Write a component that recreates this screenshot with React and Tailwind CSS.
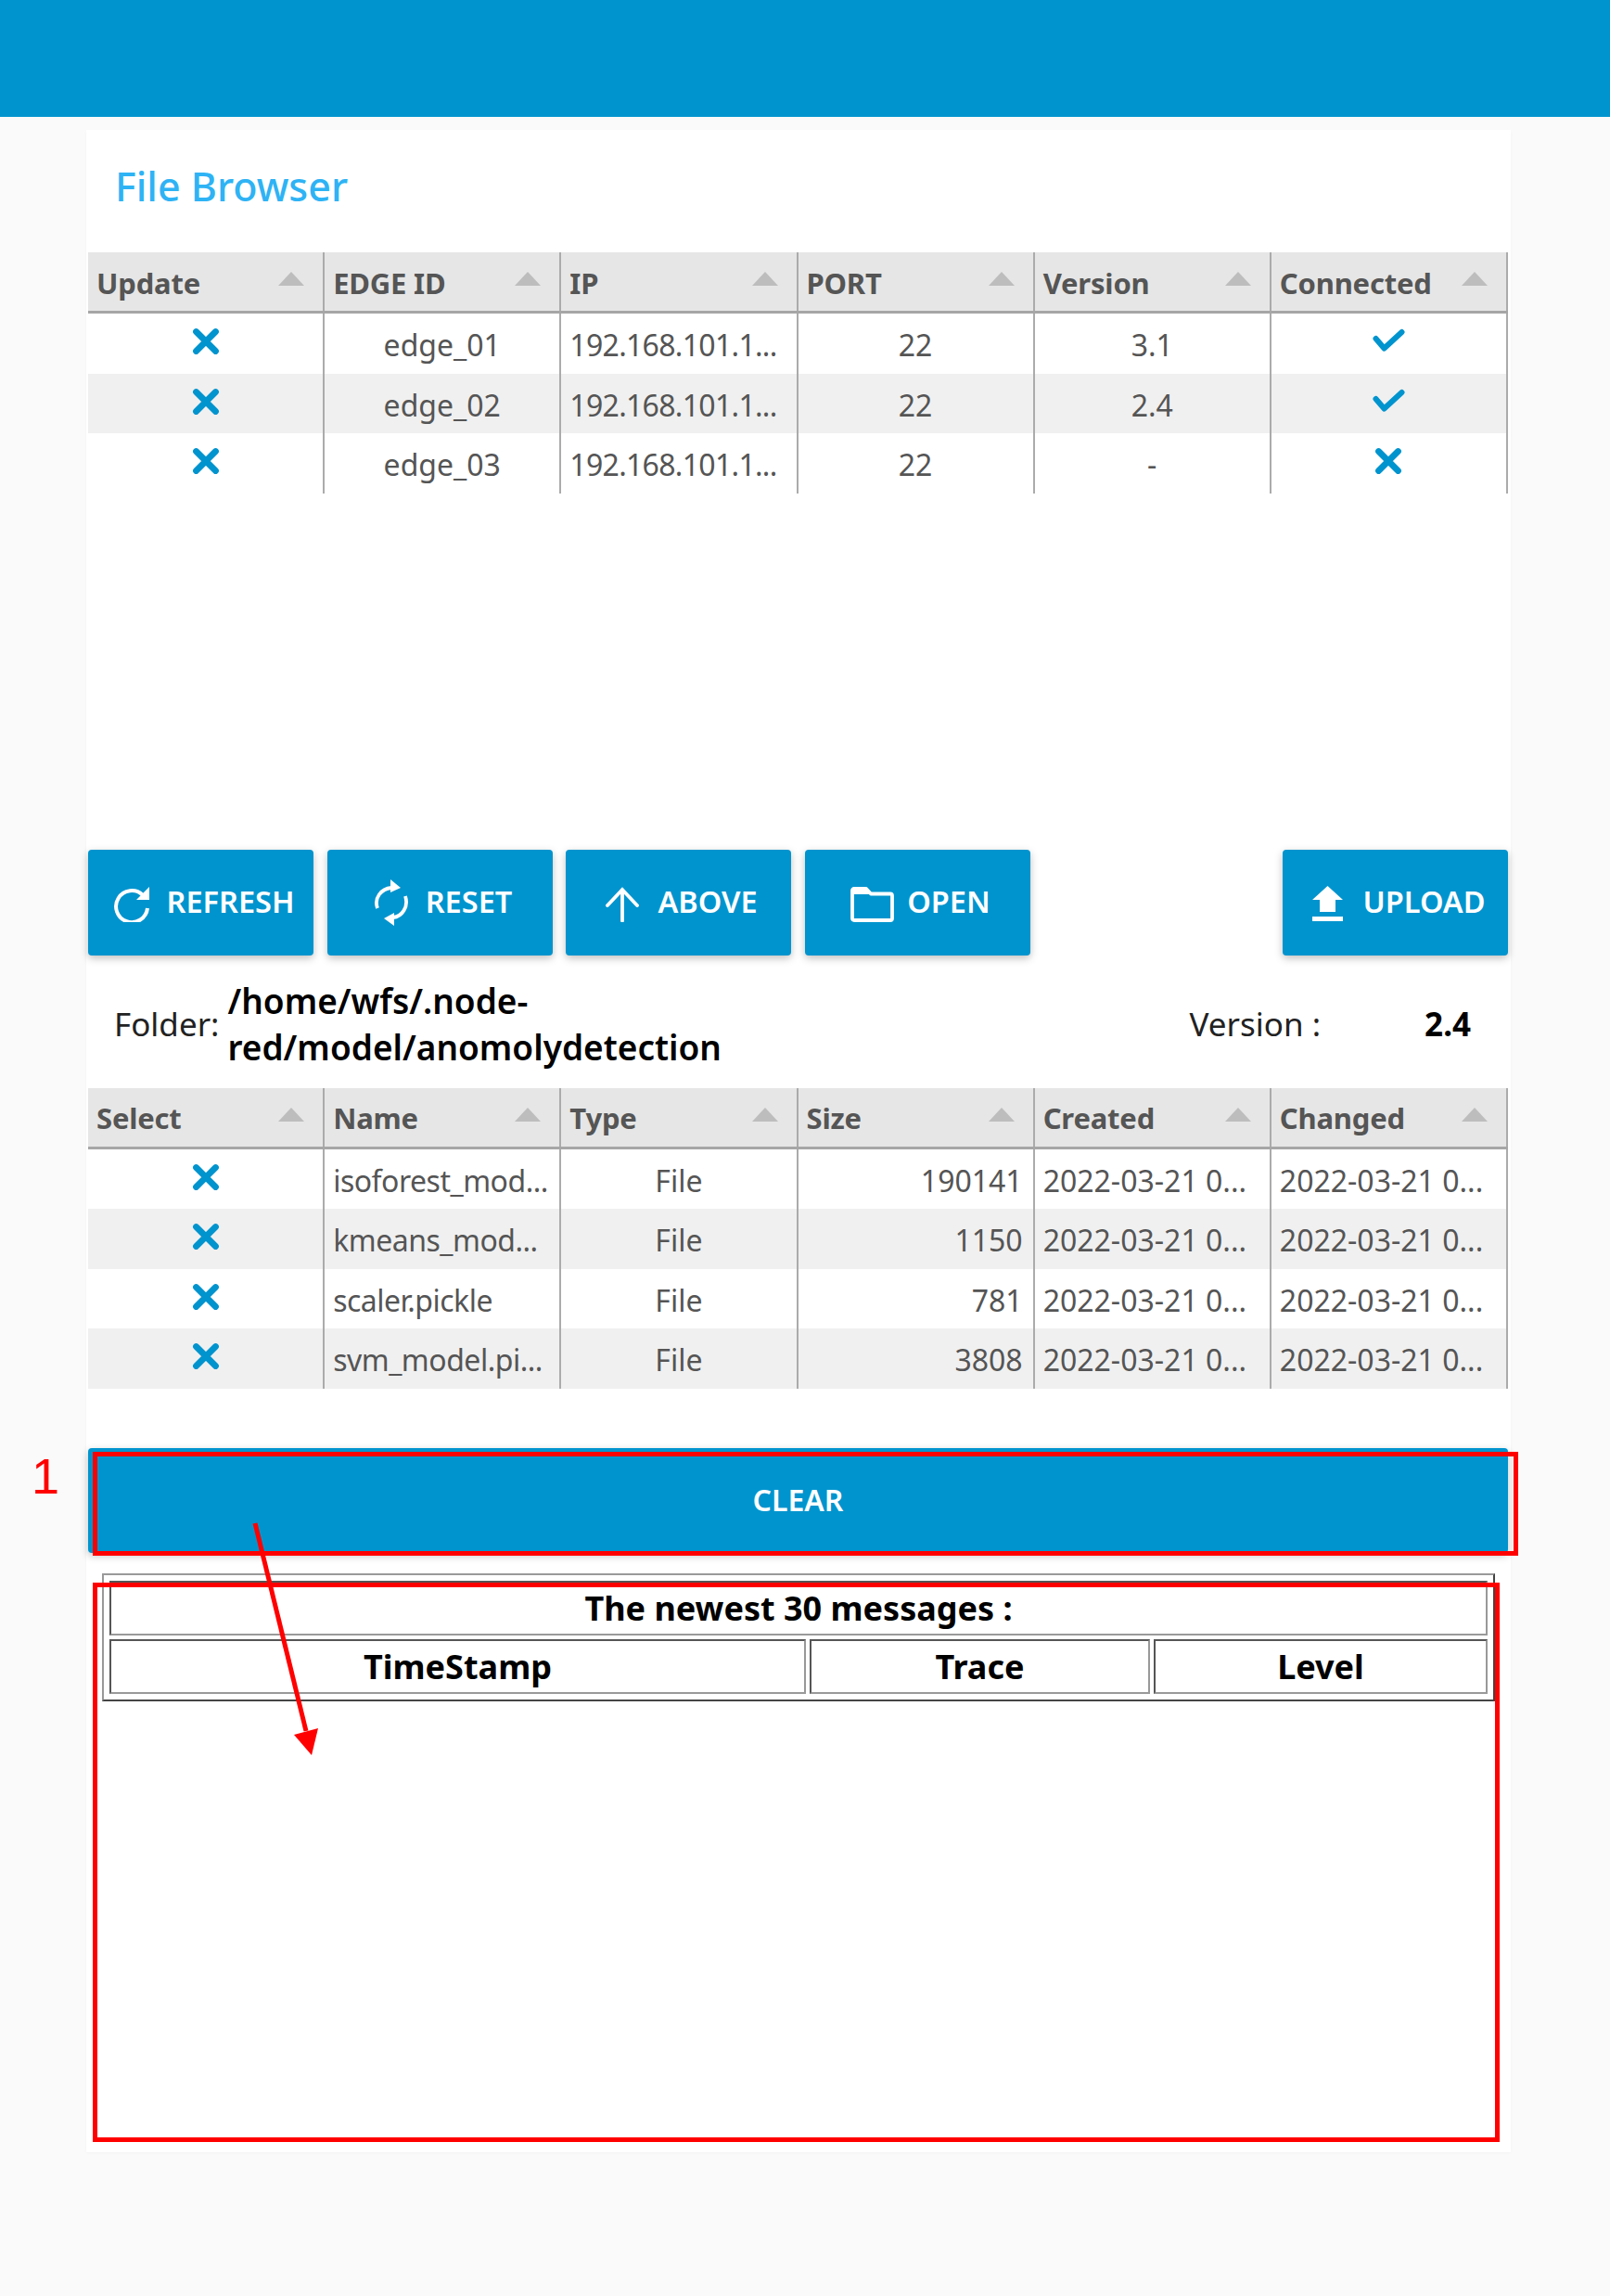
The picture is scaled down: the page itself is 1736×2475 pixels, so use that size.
import React from "react";

const FONT = "font-['Noto_Sans','Open_Sans',sans-serif]";

const Times = () => (
  <svg width="30" height="30" viewBox="0 0 30 30" className="block -mt-[4px]">
    <path d="M4.5 4.5 L25.5 25.5 M25.5 4.5 L4.5 25.5" stroke="#0094ce" strokeWidth="6.8" strokeLinecap="round" fill="none" />
  </svg>
);

const Check = () => (
  <svg width="35" height="26" viewBox="0 0 35 26" className="block -mt-[6px]">
    <path d="M3.5 11 L12.5 21.5 L31.5 4" stroke="#0094ce" strokeWidth="6" strokeLinecap="round" strokeLinejoin="round" fill="none" />
  </svg>
);

const Tri = () => (
  <svg width="28" height="15" viewBox="0 0 28 15" className="block absolute right-[20px] top-[21px]">
    <path d="M14 0 L28 15 L0 15 Z" fill="#bdbdbd" />
  </svg>
);

function Header({ cols }) {
  return (
    <div className="grid grid-cols-6 h-[66px] bg-[#e6e6e6] border-b-[3px] border-[#a6a6a6]">
      {cols.map((c) => (
        <div key={c} className="relative flex items-center pl-[9px] text-[#555] font-bold text-[31px] tracking-[-0.2px] leading-none border-r-2 border-[#ababab]">
          <span className="mt-[3px]">{c}</span>
          <Tri />
        </div>
      ))}
    </div>
  );
}

function Cell({ children, align = "center", tight = "" }) {
  const cls = align === "center" ? "justify-center" : align === "right" ? "justify-end pr-[11px]" : "justify-start pl-[9px]";
  return (
    <div className={`flex items-center ${cls} h-full text-[#555] text-[32px] leading-none whitespace-nowrap overflow-hidden border-r-2 border-[#ababab]`}>
      <span className={`flex items-center mt-[4px] ${tight}`}>{children}</span>
    </div>
  );
}

function IconCell({ children }) {
  return (
    <div className="flex items-center justify-center h-full border-r-2 border-[#ababab]">
      {children}
    </div>
  );
}

function Row({ i, children }) {
  return <div className={`grid grid-cols-6 h-[64.5px] ${i % 2 ? "bg-[#f0f0f0]" : "bg-white"}`}>{children}</div>;
}

const edges = [
  ["edge_01", "3.1", true],
  ["edge_02", "2.4", true],
  ["edge_03", "-", false],
];

const files = [
  ["isoforest_mod...", "190141"],
  ["kmeans_mod...", "1150"],
  ["scaler.pickle", "781"],
  ["svm_model.pi...", "3808"],
];

function Button({ icon, label, gap, className = "" }) {
  return (
    <button className={`flex items-center justify-center pl-[7px] w-[243px] h-[114px] bg-[#0094ce] rounded-[4px] text-white font-semibold text-[32.5px] leading-none shadow-[0_3px_8px_rgba(0,0,0,0.25)] ${gap} ${className}`}>
      {icon}
      <span>{label}</span>
    </button>
  );
}

const IconRefresh = () => (
  <svg width="39" height="39" viewBox="0 0 39 39" fill="none" className="mt-[4px]">
    <path d="M31 10 A17 17 0 1 0 36 24" stroke="#fff" strokeWidth="4" />
    <path d="M38 1 V15 H24 Z" fill="#fff" />
  </svg>
);
const IconReset = () => (
  <svg width="38" height="50" viewBox="0 0 38 50" fill="none">
    <path d="M19 9 C8 10 0 20 4 31" stroke="#fff" strokeWidth="3.8" />
    <path d="M21 41 C30 40 38 30 34 18" stroke="#fff" strokeWidth="3.8" />
    <path d="M18 0 L29 9 L18 14 Z" fill="#fff" />
    <path d="M22 36 L11 42 L22 50 Z" fill="#fff" />
  </svg>
);
const IconUp = () => (
  <svg width="36" height="38" viewBox="0 0 36 38" fill="none" className="mt-[4px]">
    <path d="M18 36.5 V3 M2 20 L18 3 L34 20" stroke="#fff" strokeWidth="3.8" strokeLinecap="round" />
  </svg>
);
const IconFolder = () => (
  <svg width="47" height="38" viewBox="0 0 47 38" fill="none" className="mt-[4px]">
    <path d="M2 34 V4 Q2 2 4 2 H17 L22 7.5 H43 Q45 7.5 45 9.5 V34 Q45 36 43 36 H4 Q2 36 2 34 Z" stroke="#fff" strokeWidth="3.8" strokeLinejoin="round" />
    <path d="M2 8 V3 H17 L21 8 Z" fill="#fff" />
  </svg>
);
const IconUpload = () => (
  <svg width="33" height="39" viewBox="0 0 33 39" fill="none" className="mt-[4px]">
    <path d="M16.5 0 L33 15 H25 V28 H8 V15 H0 Z" fill="#fff" />
    <rect x="0" y="33" width="33" height="5" fill="#fff" />
  </svg>
);

function MsgCell({ children, className = "" }) {
  return (
    <div className={`flex items-center justify-center pt-[2px] border-2 border-t-[#555] border-l-[#555] border-r-[#999] border-b-[#999] text-black font-bold text-[36px] leading-none ${className}`}>
      {children}
    </div>
  );
}

export default function App() {
  return (
    <div className={`relative min-h-[2475px] bg-[#fafafa] ${FONT}`}>
      <div className="h-[126px] bg-[#0094ce]" />
      <div className="ml-[93px] mr-[107px] mt-[14px] h-[2180px] bg-white pt-[132px] pl-[2px] pr-[3px] shadow-[0_1px_3px_rgba(0,0,0,0.03)] relative">
        <h1 className="absolute left-[31px] top-[39px] text-[#2eb3f5] text-[43px] font-medium leading-[44px]">File Browser</h1>

        <Header cols={["Update", "EDGE ID", "IP", "PORT", "Version", "Connected"]} />
        {edges.map((e, i) => (
          <Row key={e[0]} i={i}>
            <IconCell><Times /></IconCell>
            <Cell>{e[0]}</Cell>
            <Cell align="left" tight="tracking-[-0.7px]">192.168.101.1...</Cell>
            <Cell>22</Cell>
            <Cell>{e[1]}</Cell>
            <IconCell>{e[2] ? <Check /> : <Times />}</IconCell>
          </Row>
        ))}

        <div className="mt-[384px] flex gap-[14.5px]">
          <Button gap="gap-[18px]" icon={<IconRefresh />} label="REFRESH" />
          <Button gap="gap-[18px]" icon={<IconReset />} label="RESET" />
          <Button gap="gap-[20px]" icon={<IconUp />} label="ABOVE" />
          <Button gap="gap-[14px]" icon={<IconFolder />} label="OPEN" />
          <Button gap="gap-[22px]" className="ml-auto" icon={<IconUpload />} label="UPLOAD" />
        </div>

        <div className="h-[143px] flex items-center pt-[6px] pl-[28px] pr-[40px] text-[#222] text-[35px]">
          <span>Folder:</span>
          <span className="ml-[9px] w-[600px] font-semibold text-black text-[37px] leading-[50px]">
            /home/wfs/.node-<br />red/model/anomolydetection
          </span>
          <span className="ml-auto">Version :</span>
          <span className="ml-[112px] font-bold text-black">2.4</span>
        </div>

        <Header cols={["Select", "Name", "Type", "Size", "Created", "Changed"]} />
        {files.map((f, i) => (
          <Row key={f[0]} i={i}>
            <IconCell><Times /></IconCell>
            <Cell align="left" tight="tracking-[-0.5px]">{f[0]}</Cell>
            <Cell>File</Cell>
            <Cell align="right">{f[1]}</Cell>
            <Cell align="left">2022-03-21 0...</Cell>
            <Cell align="left">2022-03-21 0...</Cell>
          </Row>
        ))}

        <button className="mt-[64px] w-full h-[113px] bg-[#0094ce] rounded-[4px] text-white font-semibold text-[32px] shadow-[0_3px_8px_rgba(0,0,0,0.25)]">
          CLEAR
        </button>

        <div className="mt-[22px] ml-[15px] mr-[14px] p-[6px] border-2 border-t-[#999] border-l-[#999] border-r-[#444] border-b-[#444] flex flex-col gap-[4px]">
          <MsgCell className="h-[59px]">The newest 30 messages :</MsgCell>
          <div className="flex gap-[4px] h-[59px]">
            <MsgCell className="w-[751px]">TimeStamp</MsgCell>
            <MsgCell className="w-[367px]">Trace</MsgCell>
            <MsgCell className="flex-1">Level</MsgCell>
          </div>
        </div>
      </div>

      {/* annotations drawn on top of the screenshot */}
      <div className="absolute left-[100px] top-[1565px] w-[1537px] h-[112px] border-[5px] border-[#ff0000]" />
      <div className="absolute left-[100px] top-[1706px] w-[1517px] h-[603px] border-[5px] border-[#ff0000]" />
      <span className="absolute left-[34px] top-[1559px] text-[#ff0000] text-[54px] leading-[64px] font-['Liberation_Sans',sans-serif]">1</span>
      <svg className="absolute left-[260px] top-[1630px]" width="90" height="270" viewBox="0 0 90 270" fill="none">
        <path d="M15 12 L70 236" stroke="#ff0000" strokeWidth="5" />
        <path d="M57 240 L83 233 L76 262 Z" fill="#ff0000" />
      </svg>
    </div>
  );
}
